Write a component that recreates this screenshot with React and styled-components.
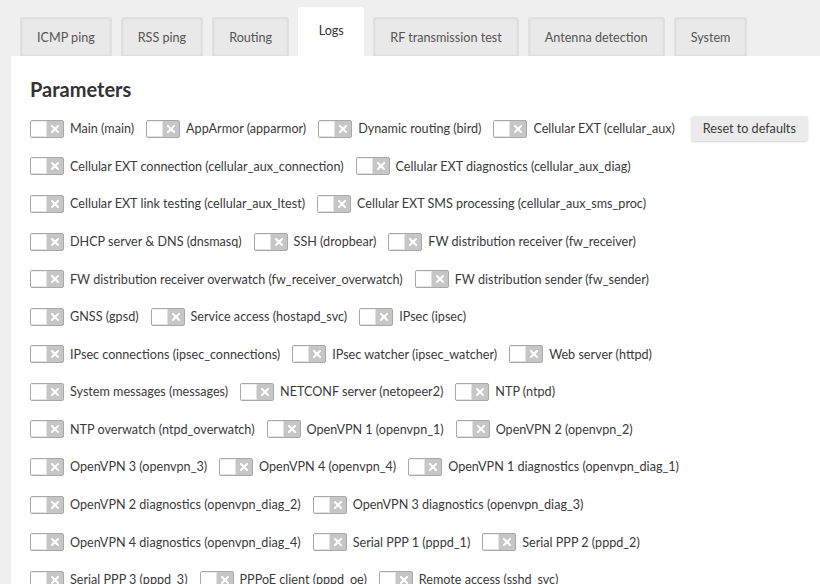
import React from "react";
import styled, { createGlobalStyle } from "styled-components";

const Global = createGlobalStyle`
  html, body { margin: 0; padding: 0; background: #efefef; }
  body { font-family: Lato, "Open Sans", sans-serif; color: #333; overflow: hidden; }
`;

const Page = styled.div`
  width: 820px;
  height: 584px;
  display: flex;
  flex-direction: column;
  overflow: hidden;
`;

const TabBar = styled.div`
  display: flex;
  align-items: flex-end;
  gap: 9px;
  padding: 7px 0 0 20px;
  height: 56px;
  box-sizing: border-box;
  position: relative;
  z-index: 1;
  flex-shrink: 0;
`;

const Tab = styled.div`
  box-sizing: border-box;
  height: ${p => (p.$active ? "49px" : "39px")};
  padding: ${p => (p.$active ? "0 20.5px 3px" : "0 16px")};
  display: flex;
  align-items: center;
  justify-content: center;
  font-size: 12.6px;
  color: ${p => (p.$active ? "#333" : "#555")};
  background: ${p => (p.$active ? "#fff" : "#e9e9e9")};
  border-radius: 3px 3px 0 0;
  box-shadow: ${p =>
    p.$active ? "none" : "inset 0 0 3px rgba(0,0,0,0.12)"};
  border: ${p => (p.$active ? "none" : "1px solid #e0e0e0")};
  border-bottom: none;
  white-space: nowrap;
`;

const Panel = styled.div`
  flex: 1;
  margin-left: 11px;
  background: #fff;
  padding: 21px 0 0 19px;
  position: relative;
  z-index: 2;
`;

const Heading = styled.h2`
  margin: 0 0 9px;
  font-size: 20px;
  line-height: 24px;
  font-weight: 700;
  color: #333;
`;

const Rows = styled.div`
  display: flex;
  flex-direction: column;
`;

const Row = styled.div`
  display: flex;
  align-items: center;
  height: 37.58px;
  white-space: nowrap;
`;

const Item = styled.label`
  display: flex;
  align-items: center;
  gap: 6px;
  margin-right: 12px;
  font-size: 12.6px;
  color: #3a3a3a;
`;

const Toggle = styled.span`
  box-sizing: border-box;
  width: 34px;
  height: 18px;
  border: 1px solid #a8a8a8;
  border-radius: 2px;
  background: #c6c6c6;
  display: flex;
  align-items: center;
  flex-shrink: 0;
`;

const Knob = styled.span`
  box-sizing: border-box;
  width: 16px;
  height: 16px;
  background: #fff;
  border: 1px solid #e2e2e2;
  border-left: none;
  border-top-color: #f0f0f0;
`;

const Cross = styled.span`
  flex: 1;
  display: flex;
  align-items: center;
  justify-content: center;
`;

const ResetButton = styled.button`
  margin-left: 4px;
  height: 25px;
  padding: 0 12px;
  font-family: Lato, "Open Sans", sans-serif;
  font-size: 12.6px;
  color: #3a3a3a;
  background: #ebebeb;
  border: none;
  border-radius: 3px;
  box-shadow: 0 1px 2px rgba(0, 0, 0, 0.18);
`;

const tabs = [
  "ICMP ping",
  "RSS ping",
  "Routing",
  "Logs",
  "RF transmission test",
  "Antenna detection",
  "System",
];

const rows = [
  ["Main (main)", "AppArmor (apparmor)", "Dynamic routing (bird)", "Cellular EXT (cellular_aux)"],
  ["Cellular EXT connection (cellular_aux_connection)", "Cellular EXT diagnostics (cellular_aux_diag)"],
  ["Cellular EXT link testing (cellular_aux_ltest)", "Cellular EXT SMS processing (cellular_aux_sms_proc)"],
  ["DHCP server & DNS (dnsmasq)", "SSH (dropbear)", "FW distribution receiver (fw_receiver)"],
  ["FW distribution receiver overwatch (fw_receiver_overwatch)", "FW distribution sender (fw_sender)"],
  ["GNSS (gpsd)", "Service access (hostapd_svc)", "IPsec (ipsec)"],
  ["IPsec connections (ipsec_connections)", "IPsec watcher (ipsec_watcher)", "Web server (httpd)"],
  ["System messages (messages)", "NETCONF server (netopeer2)", "NTP (ntpd)"],
  ["NTP overwatch (ntpd_overwatch)", "OpenVPN 1 (openvpn_1)", "OpenVPN 2 (openvpn_2)"],
  ["OpenVPN 3 (openvpn_3)", "OpenVPN 4 (openvpn_4)", "OpenVPN 1 diagnostics (openvpn_diag_1)"],
  ["OpenVPN 2 diagnostics (openvpn_diag_2)", "OpenVPN 3 diagnostics (openvpn_diag_3)"],
  ["OpenVPN 4 diagnostics (openvpn_diag_4)", "Serial PPP 1 (pppd_1)", "Serial PPP 2 (pppd_2)"],
  ["Serial PPP 3 (pppd_3)", "PPPoE client (pppd_oe)", "Remote access (sshd_svc)"],
];

function Switch() {
  return (
    <Toggle>
      <Knob />
      <Cross>
        <svg width="8" height="8" viewBox="0 0 8 8">
          <path d="M1 1L7 7M7 1L1 7" stroke="#fff" strokeWidth="2" strokeLinecap="square" />
        </svg>
      </Cross>
    </Toggle>
  );
}

export default function App() {
  return (
    <Page>
      <Global />
      <TabBar>
        {tabs.map(t => (
          <Tab key={t} $active={t === "Logs"}>{t}</Tab>
        ))}
      </TabBar>
      <Panel>
        <Heading>Parameters</Heading>
        <Rows>
          {rows.map((r, i) => (
            <Row key={i}>
              {r.map(label => (
                <Item key={label}>
                  <Switch />
                  {label}
                </Item>
              ))}
              {i === 0 && <ResetButton>Reset to defaults</ResetButton>}
            </Row>
          ))}
        </Rows>
      </Panel>
    </Page>
  );
}
